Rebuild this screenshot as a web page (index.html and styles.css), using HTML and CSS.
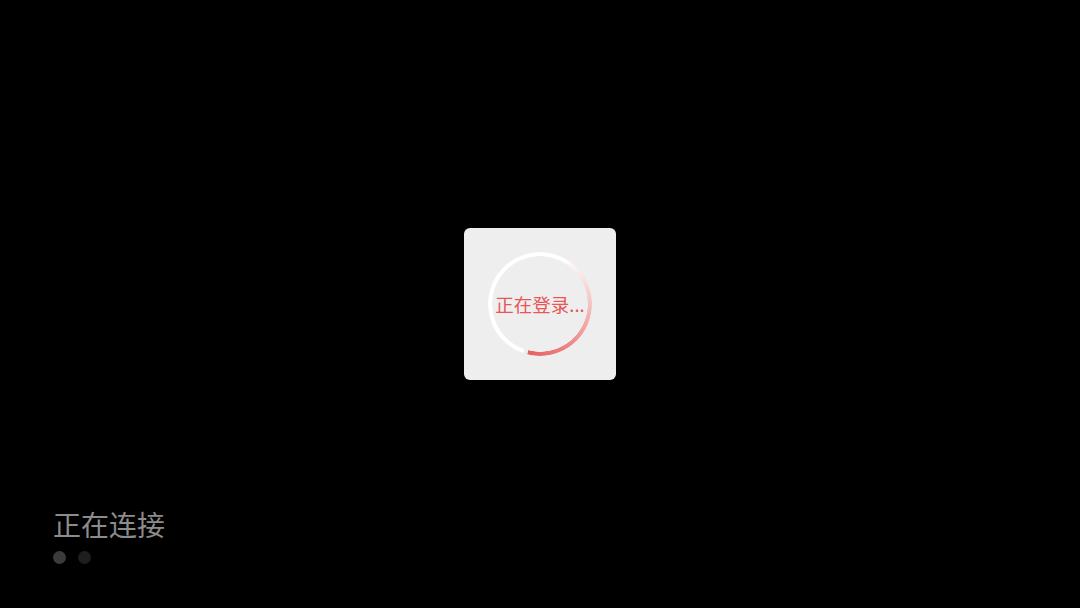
FILE: index.html
```html
<!DOCTYPE html>
<html lang="zh-CN">
<head>
<meta charset="utf-8">
<title>正在连接</title>
<link rel="stylesheet" href="styles.css">
</head>
<body>
<main class="screen">
  <section class="status">
    <p class="status-text">正在连接</p>
    <div class="dots">
      <span class="dot dot-active"></span>
      <span class="dot"></span>
    </div>
  </section>
</main>
<div class="overlay">
  <div class="dialog">
    <div class="spinner">
      <div class="ring"></div>
      <span class="label">正在登录...</span>
    </div>
  </div>
</div>
</body>
</html>
```
FILE: styles.css
```css
html, body {
  margin: 0;
  padding: 0;
  background: #000;
  width: 1080px;
  height: 608px;
  overflow: hidden;
  font-family: "Noto Sans CJK SC", "Noto Sans", sans-serif;
}
.screen {
  height: 608px;
  display: flex;
  flex-direction: column;
  justify-content: flex-end;
  padding: 0 0 0 53px;
  box-sizing: border-box;
}
.status {
  padding-bottom: 44px;
}
.status-text {
  margin: 0;
  color: #8c8c8c;
  font-size: 28px;
  line-height: 40px;
}
.dots {
  display: flex;
  gap: 12px;
  margin-top: 7px;
}
.dot {
  width: 13px;
  height: 13px;
  border-radius: 50%;
  background: #1e1e1e;
}
.dot-active {
  background: #3b3b3b;
}
.overlay {
  position: fixed;
  inset: 0;
  display: flex;
  align-items: center;
  justify-content: center;
}
.dialog {
  width: 152px;
  height: 152px;
  border-radius: 6px;
  background: #eeeeee;
  display: flex;
  align-items: center;
  justify-content: center;
}
.spinner {
  width: 104px;
  height: 104px;
  display: grid;
  place-items: center;
}
.ring, .label {
  grid-area: 1 / 1;
}
.ring {
  width: 104px;
  height: 104px;
  border-radius: 50%;
  background: conic-gradient(from 199deg, #ffffff 0deg, #ffffff 190deg, #f7d4d4 235deg, #ee8c8c 300deg, #e85f5f 355deg, transparent 355.5deg);
  -webkit-mask: radial-gradient(circle, transparent 47.5px, #000 48px);
  mask: radial-gradient(circle, transparent 47.5px, #000 48px);
}
.label {
  color: #e95656;
  font-size: 18.5px;
  line-height: 24px;
  white-space: nowrap;
}
```
